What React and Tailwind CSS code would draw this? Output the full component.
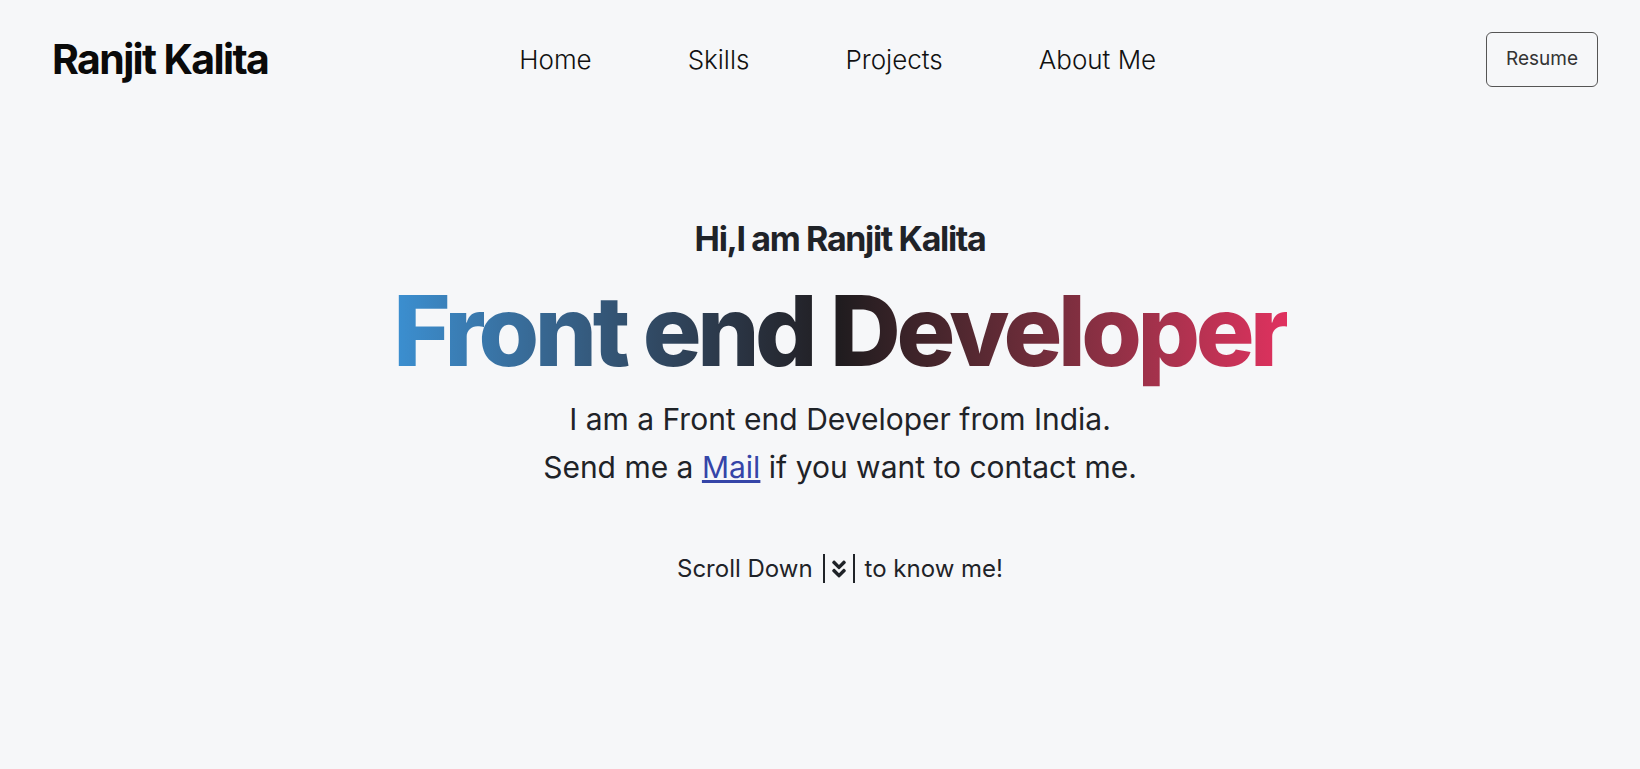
import React from "react";
import { FaAngleDoubleDown } from "react-icons/fa";

export default function App() {
  return (
    <div className="min-h-[769px] w-full bg-[#f6f7f9] text-[#1f2328]" style={{ fontFamily: "Inter, 'Noto Sans', sans-serif" }}>
      <header className="flex items-center pl-[52px] pr-[42px] pt-[32px]">
        <div className="text-[41px] font-bold tracking-[-0.04em] text-[#0a0a0a] leading-none">Ranjit Kalita</div>
        <nav className="ml-[251px] flex gap-[96px] text-[26px] font-light text-[#111]">
          <a href="#">Home</a>
          <a href="#">Skills</a>
          <a href="#">Projects</a>
          <a href="#">About Me</a>
        </nav>
        <button className="ml-auto h-[55px] rounded-[6px] border border-[#555] px-[19px] text-[19px] text-[#333]">Resume</button>
      </header>

      <main className="flex flex-col items-center pl-[40px] pt-[132px]">
        <h2 className="text-[34px] font-bold tracking-[-0.04em] leading-[1.2] text-[#1f2328]">Hi,I am Ranjit Kalita</h2>
        <h1 className="mt-[17px] bg-gradient-to-r from-[#3b90d2] via-[#201c1f] to-[#e0315f] bg-clip-text pb-[10px] text-[98px] font-extrabold leading-[1.1] tracking-[-0.045em] text-transparent">
          Front end Developer
        </h1>
        <p className="mt-0 text-center text-[30px] leading-[48px] text-[#1f2328]">
          I am a Front end Developer from India.
          <br />
          Send me a <a href="#" className="text-[#3545a8] underline">Mail</a> if you want to contact me.
        </p>
        <div className="mt-[60px] flex items-center text-[24px] text-[#1f2328]">
          <span>Scroll Down</span>
          <span className="ml-[10px] flex h-[29px] items-center border-x-2 border-[#1f2328] px-[6px]">
            <FaAngleDoubleDown className="h-[22px] w-[16px]" />
          </span>
          <span className="ml-[10px]">to know me!</span>
        </div>
      </main>
    </div>
  );
}
